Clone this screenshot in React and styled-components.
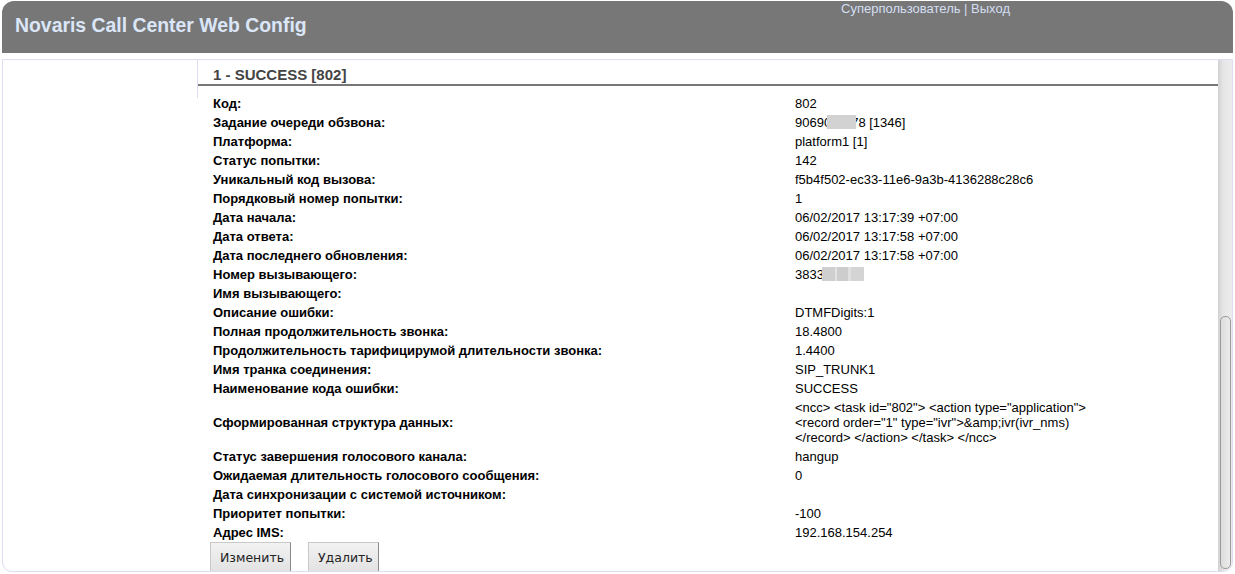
import React from 'react';
import styled, { createGlobalStyle } from 'styled-components';

const GlobalStyle = createGlobalStyle`
  html, body {
    margin: 0;
    padding: 0;
    background: #fff;
  }
  body {
    font-family: "Liberation Sans", Arial, sans-serif;
    font-size: 13px;
    color: #000;
  }
`;

const Page = styled.div`
  padding: 1px 2px 0;
`;

const Header = styled.div`
  height: 52px;
  background: #777;
  border-radius: 12px 12px 0 0;
  display: flex;
  align-items: flex-start;
`;

const Title = styled.h1`
  margin: 0;
  padding: 13px 0 0 13px;
  font-size: 19.4px;
  line-height: 22px;
  font-weight: bold;
  color: #dbe6f8;
`;

const UserLinks = styled.div`
  margin: 1px 223px 0 auto;
  color: #d4dff2;
  font-size: 13px;
  line-height: 14px;
`;

const Frame = styled.div`
  margin-top: 6px;
  height: 511px;
  border: 1px solid #dcdcf2;
  border-radius: 0 0 10px 10px;
  display: flex;
  overflow: hidden;
`;

const Sidebar = styled.div`
  width: 194px;
  flex: none;
`;

const Content = styled.div`
  flex: 1;
  overflow: hidden;
`;

const Heading = styled.h2`
  position: relative;
  margin: 0;
  padding: 6px 0 0 15px;
  font-size: 15px;
  line-height: 18px;
  font-weight: bold;
  color: #444;
  border-left: 1px solid #dcdcf2;
  border-bottom: 2px solid #777;

  &::after {
    content: '';
    position: absolute;
    left: -1px;
    top: 100%;
    width: 1px;
    height: 14px;
    background: #dcdcf2;
  }
`;

const Table = styled.div`
  margin: 8px 0 0 16px;
  display: grid;
  grid-template-columns: 582px 318px;
  align-items: center;
`;

const Label = styled.div`
  font-weight: bold;
  padding: 2px 0;
  line-height: 15px;
`;

const Value = styled.div`
  padding: 2px 0;
  line-height: 15px;
`;

const Redact = styled.span`
  position: relative;
  z-index: 1;
  display: inline-block;
  vertical-align: -2px;
  width: ${p => p.$w}px;
  height: 14px;
  margin: 0 ${p => p.$mr || 0}px 0 ${p => p.$ml || 0}px;
  background: ${p => p.$stripes
    ? 'linear-gradient(90deg, #cfcfcf 0 30%, #e2e2e2 30% 36%, #cdcdcd 36% 62%, #e0e0e0 62% 68%, #d4d4d4 68% 100%)'
    : '#d2d2d2'};
`;

const Buttons = styled.div`
  margin: 0 0 0 13px;
  display: flex;
  gap: 17px;
`;

const Button = styled.button`
  font-family: "DejaVu Sans", "Liberation Sans", sans-serif;
  font-size: 12.5px;
  color: #222;
  height: 31px;
  padding: 0 9px;
  background: linear-gradient(#f2f2f2, #e2e2e2);
  border: 1px solid #c8c8c8;
  border-right-color: #8a8a8a;
  border-bottom-color: #8a8a8a;
  border-radius: 0;
  width: ${p => p.$w}px;
`;

const Scrollbar = styled.div`
  width: 14px;
  flex: none;
  background: linear-gradient(90deg, #d2d2d2, #e6e6e6 40%, #ececec);
  display: flex;
  flex-direction: column;
  justify-content: flex-end;
  padding: 0 1px 2px 2px;
  box-sizing: border-box;
`;

const Thumb = styled.div`
  height: 251px;
  border: 1px solid #999;
  border-radius: 5px;
  background: linear-gradient(90deg, #dcdcdc, #ececec);
`;

const rows = [
  ['Код:', '802'],
  ['Задание очереди обзвона:', <>90690<Redact $w={29} $ml={-4} $mr={-5} />78 [1346]</>],
  ['Платформа:', 'platform1 [1]'],
  ['Статус попытки:', '142'],
  ['Уникальный код вызова:', 'f5b4f502-ec33-11e6-9a3b-4136288c28c6'],
  ['Порядковый номер попытки:', '1'],
  ['Дата начала:', '06/02/2017 13:17:39 +07:00'],
  ['Дата ответа:', '06/02/2017 13:17:58 +07:00'],
  ['Дата последнего обновления:', '06/02/2017 13:17:58 +07:00'],
  ['Номер вызывающего:', <>3833<Redact $w={42} $ml={-2} $stripes /></>],
  ['Имя вызывающего:', ''],
  ['Описание ошибки:', 'DTMFDigits:1'],
  ['Полная продолжительность звонка:', '18.4800'],
  ['Продолжительность тарифицирумой длительности звонка:', '1.4400'],
  ['Имя транка соединения:', 'SIP_TRUNK1'],
  ['Наименование кода ошибки:', 'SUCCESS'],
  ['Сформированная структура данных:', '<ncc> <task id="802"> <action type="application"> <record order="1" type="ivr">&amp;ivr(ivr_nms) </record> </action> </task> </ncc>'],
  ['Статус завершения голосового канала:', 'hangup'],
  ['Ожидаемая длительность голосового сообщения:', '0'],
  ['Дата синхронизации с системой источником:', ''],
  ['Приоритет попытки:', '-100'],
  ['Адрес IMS:', '192.168.154.254'],
];

export default function App() {
  return (
    <Page>
      <GlobalStyle />
      <Header>
        <Title>Novaris Call Center Web Config</Title>
        <UserLinks>Суперпользователь | Выход</UserLinks>
      </Header>
      <Frame>
        <Sidebar />
        <Content>
          <Heading>1 - SUCCESS [802]</Heading>
          <Table>
            {rows.map(([label, value]) => (
              <React.Fragment key={label}>
                <Label>{label}</Label>
                <Value>{value || '\u00a0'}</Value>
              </React.Fragment>
            ))}
          </Table>
          <Buttons>
            <Button $w={81}>Изменить</Button>
            <Button $w={71}>Удалить</Button>
          </Buttons>
        </Content>
        <Scrollbar>
          <Thumb />
        </Scrollbar>
      </Frame>
    </Page>
  );
}
